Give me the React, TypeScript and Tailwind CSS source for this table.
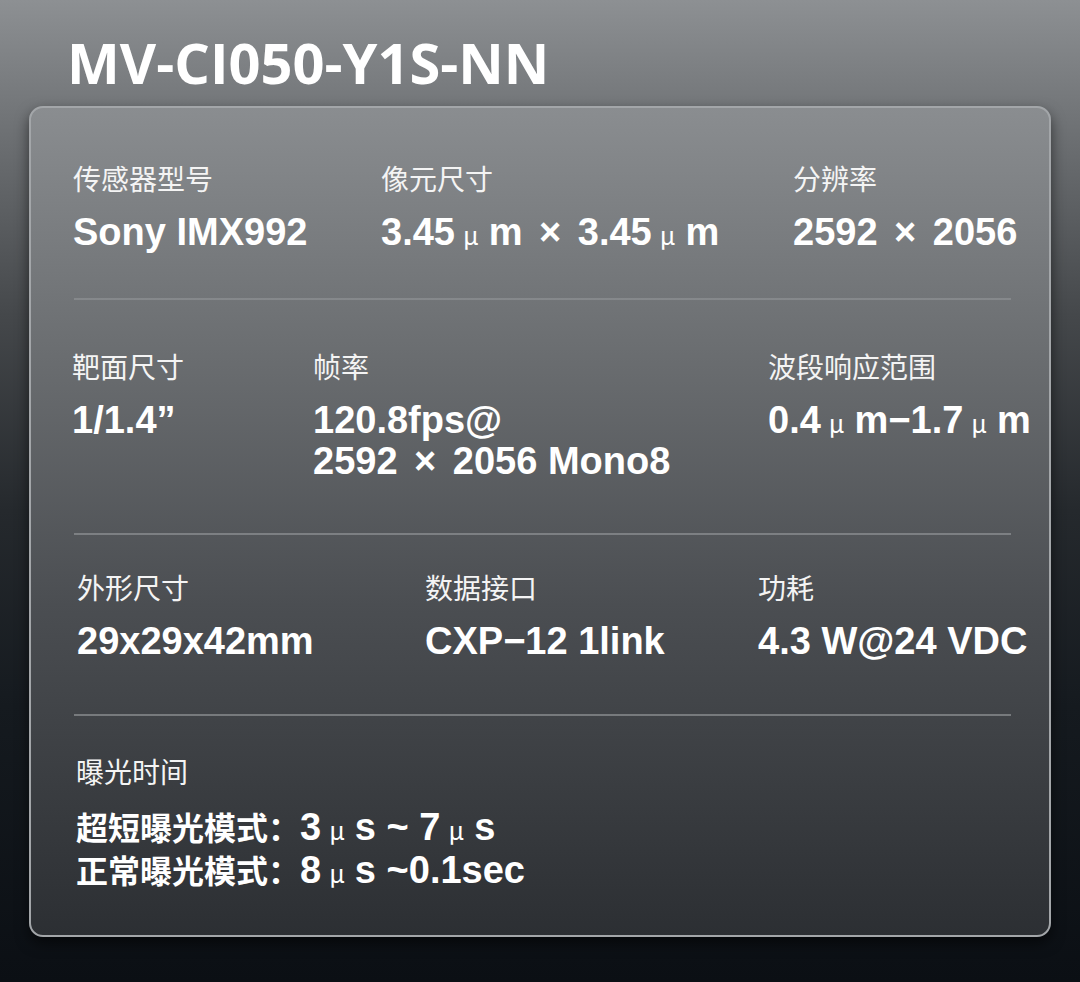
import React from "react";

const CJK = '"Noto Sans CJK SC", sans-serif';
const VAL = '"Liberation Sans", "Noto Sans CJK SC", sans-serif';

function Mu() {
  return (
    <span
      className="text-[25px] font-normal ml-[8px] mr-[10px]"
      style={{ fontFamily: CJK }}
    >
      μ
    </span>
  );
}

function X() {
  return <span className="mx-[6px]">×</span>;
}

function Label({ children }: { children: React.ReactNode }) {
  return (
    <div
      className="text-[28px] leading-[36px] text-[#f4f4f4] font-normal"
      style={{ fontFamily: CJK }}
    >
      {children}
    </div>
  );
}

function Value({ children }: { children: React.ReactNode }) {
  return (
    <div
      className="mt-[16px] text-[38px] leading-[41px] font-bold text-white whitespace-nowrap"
      style={{ fontFamily: VAL }}
    >
      {children}
    </div>
  );
}

function Divider() {
  return <div className="ml-[43px] mr-[38px] h-[2px] bg-[#8e9194]/70" />;
}

export default function App() {
  return (
    <div className="w-[1080px] h-[982px] overflow-hidden bg-[linear-gradient(180deg,#8d9093_0%,#6a6d70_15%,#45484b_32%,#25292d_52%,#151a1f_72%,#0b0f14_100%)]">
      <div className="pt-[31px] pl-[67px]">
        <h1
          className="text-[56px] leading-[62px] font-bold text-white"
          style={{ fontFamily: '"Open Sans", sans-serif' }}
        >
          MV-CI050-Y1S-NN
        </h1>
      </div>
      <div className="mt-[13px] ml-[29px] w-[1022px] h-[831px] rounded-[14px] border-2 border-[#a3a6a9] bg-[linear-gradient(180deg,#8a8d90_0%,#6a6d70_30%,#4b4e52_60%,#2c2f33_100%)] shadow-[0_6px_14px_rgba(0,0,0,0.55)]">
        {/* Row 1 */}
        <div className="flex pl-[42px] pt-[52px] h-[190px]">
          <div className="w-[308px]">
            <Label>传感器型号</Label>
            <Value>Sony IMX992</Value>
          </div>
          <div className="w-[412px]">
            <Label>像元尺寸</Label>
            <Value>
              3.45<Mu />m <X /> 3.45<Mu />m
            </Value>
          </div>
          <div className="flex-1">
            <Label>分辨率</Label>
            <Value>
              2592 <X /> 2056
            </Value>
          </div>
        </div>
        <Divider />
        {/* Row 2 */}
        <div className="flex pl-[41px] pt-[48px] h-[233px]">
          <div className="w-[241px]">
            <Label>靶面尺寸</Label>
            <Value>1/1.4”</Value>
          </div>
          <div className="w-[455px]">
            <Label>帧率</Label>
            <Value>
              120.8fps@
              <br />
              2592 <X /> 2056 Mono8
            </Value>
          </div>
          <div className="flex-1">
            <Label>波段响应范围</Label>
            <Value>
              0.4<Mu />m−1.7<Mu />m
            </Value>
          </div>
        </div>
        <Divider />
        {/* Row 3 */}
        <div className="flex pl-[46px] pt-[34px] h-[179px]">
          <div className="w-[348px]">
            <Label>外形尺寸</Label>
            <Value>29x29x42mm</Value>
          </div>
          <div className="w-[333px]">
            <Label>数据接口</Label>
            <Value>CXP−12 1link</Value>
          </div>
          <div className="flex-1">
            <Label>功耗</Label>
            <Value>4.3 W@24 VDC</Value>
          </div>
        </div>
        <Divider />
        {/* Row 4 */}
        <div className="pl-[45px] pt-[37px]">
          <Label>曝光时间</Label>
          <div className="mt-[10px] text-white font-bold">
            <div className="flex items-baseline h-[43px]">
              <span className="text-[32px]" style={{ fontFamily: CJK }}>
                超短曝光模式：
              </span>
              <span className="text-[38px]" style={{ fontFamily: VAL }}>
                3<Mu />s ~ 7<Mu />s
              </span>
            </div>
            <div className="flex items-baseline h-[43px]">
              <span className="text-[32px]" style={{ fontFamily: CJK }}>
                正常曝光模式：
              </span>
              <span className="text-[38px]" style={{ fontFamily: VAL }}>
                8<Mu />s ~0.1sec
              </span>
            </div>
          </div>
        </div>
      </div>
    </div>
  );
}
